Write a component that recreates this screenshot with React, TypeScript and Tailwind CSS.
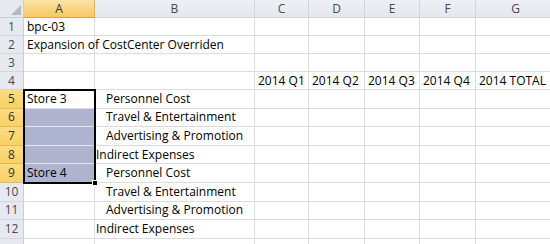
import { ReactNode } from "react";

const cols = [
  { key: "A", w: "w-[71px]" },
  { key: "B", w: "w-[160px]" },
  { key: "C", w: "w-[54px]" },
  { key: "D", w: "w-[56px]" },
  { key: "E", w: "w-[55px]" },
  { key: "F", w: "w-[56px]" },
  { key: "G", w: "w-[80px]" },
];

type Row = {
  n: number;
  h: string;
  cells: Record<string, ReactNode>;
  indentB?: boolean;
};

const rows: Row[] = [
  { n: 1, h: "h-[18px]", cells: { A: "bpc-03" } },
  { n: 2, h: "h-[18px]", cells: { A: "Expansion of CostCenter Overriden" } },
  { n: 3, h: "h-[18px]", cells: {} },
  {
    n: 4,
    h: "h-[18px]",
    cells: { C: "2014 Q1", D: "2014 Q2", E: "2014 Q3", F: "2014 Q4", G: "2014 TOTAL" },
  },
  { n: 5, h: "h-[18.6px]", cells: { A: "Store 3", B: "Personnel Cost" }, indentB: true },
  { n: 6, h: "h-[18.6px]", cells: { B: "Travel & Entertainment" }, indentB: true },
  { n: 7, h: "h-[18.6px]", cells: { B: "Advertising & Promotion" }, indentB: true },
  { n: 8, h: "h-[18.6px]", cells: { B: "Indirect Expenses" } },
  { n: 9, h: "h-[18.6px]", cells: { A: "Store 4", B: "Personnel Cost" }, indentB: true },
  { n: 10, h: "h-[18.6px]", cells: { B: "Travel & Entertainment" }, indentB: true },
  { n: 11, h: "h-[18.6px]", cells: { B: "Advertising & Promotion" }, indentB: true },
  { n: 12, h: "h-[18.6px]", cells: { B: "Indirect Expenses" } },
  { n: 13, h: "h-[18.6px]", cells: {} },
];

const inSel = (n: number) => n >= 5 && n <= 9;

export default function App() {
  return (
    <div
      className="w-[550px] h-[244px] overflow-hidden bg-white text-[12px] text-black"
      style={{ fontFamily: '"Open Sans", "Liberation Sans", sans-serif' }}
    >
      <div className="relative">
        {/* column headers */}
        <div className="flex h-[18px]">
          <div className="relative w-[24px] shrink-0 bg-[#e6e9f0] border-r border-b border-[#c9ced8]">
            <div className="absolute right-[2px] bottom-[2px] w-0 h-0 border-l-[10px] border-l-transparent border-b-[10px] border-b-[#b4b9c2]" />
          </div>
          {cols.map((c) => (
            <div
              key={c.key}
              className={`${c.w} shrink-0 flex items-center justify-center border-r border-b ${
                c.key === "A"
                  ? "bg-gradient-to-b from-[#fbe3a6] to-[#f5c862] border-b-[#f29b38] border-r-[#e8b45a] text-[#333]"
                  : "bg-gradient-to-b from-[#eef0f5] to-[#e3e7ee] border-[#d2d6de] text-[#4a4a4a]"
              }`}
            >
              {c.key}
            </div>
          ))}
        </div>

        {rows.map((r) => (
          <div key={r.n} className={`flex ${r.h}`}>
            <div
              className={`w-[24px] shrink-0 flex items-center justify-center border-r border-b ${
                inSel(r.n)
                  ? "bg-gradient-to-b from-[#fcdc82] to-[#f8d066] border-b-[#e6b84e] border-r-[#f29b38] text-[#333]"
                  : "bg-[#e6e9f0] border-b-[#d2d6de] border-r-[#c9ced8] text-[#4a4a4a]"
              }`}
            >
              {r.n < 13 ? r.n : null}
            </div>
            {cols.map((c) => {
              const v = r.cells[c.key];
              const hl = c.key === "A" && r.n >= 6 && r.n <= 9;
              return (
                <div
                  key={c.key}
                  className={`${c.w} shrink-0 flex items-center whitespace-nowrap border-r border-b ${
                    hl ? "bg-[#aeb4cf] border-[#e4e6ee]" : "border-[#dcdcdc]"
                  } ${c.key === "B" && r.indentB ? "pl-[11px]" : c.key === "B" ? "pl-[1px]" : "pl-[3px]"}`}
                >
                  {v}
                </div>
              );
            })}
          </div>
        ))}

        {/* selection border A5:A9 */}
        <div className="absolute left-[23px] top-[89px] w-[73px] h-[95px] border-2 border-black pointer-events-none">
          <div className="absolute -right-[4px] -bottom-[4px] w-[6px] h-[6px] bg-black border border-white" />
        </div>
      </div>
    </div>
  );
}
